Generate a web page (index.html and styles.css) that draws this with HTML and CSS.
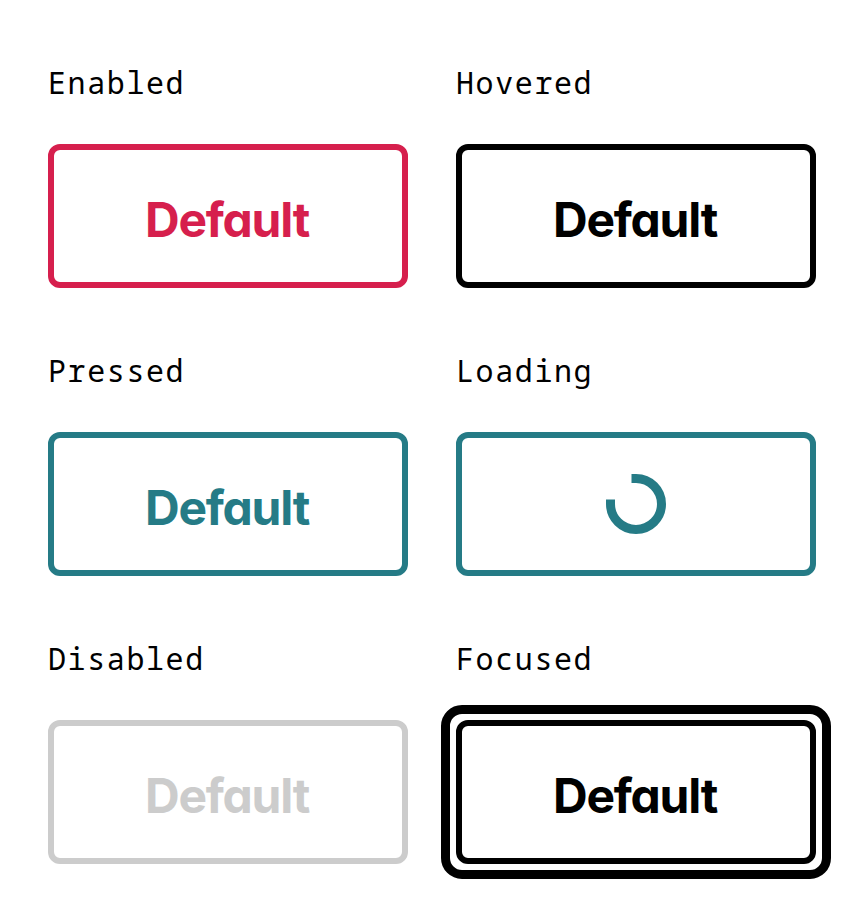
FILE: index.html
```html
<!DOCTYPE html>
<html lang="en">
<head>
<meta charset="utf-8">
<title>Button states</title>
<link rel="stylesheet" href="styles.css">
</head>
<body>
<main class="grid">
  <section class="state"><h2 class="label">Enabled</h2><button class="btn enabled"><span class="text">Default</span></button></section>
  <section class="state"><h2 class="label">Hovered</h2><button class="btn hovered"><span class="text">Default</span></button></section>
  <section class="state"><h2 class="label">Pressed</h2><button class="btn pressed"><span class="text">Default</span></button></section>
  <section class="state"><h2 class="label">Loading</h2><button class="btn pressed" aria-label="Loading"><svg class="spinner" viewBox="0 0 60 60"><path d="M4.5 25.5V30A25.5 25.5 0 1 0 30 4.5H25.5" fill="none" stroke="currentColor" stroke-width="9"/></svg></button></section>
  <section class="state"><h2 class="label">Disabled</h2><button class="btn disabled"><span class="text">Default</span></button></section>
  <section class="state"><h2 class="label">Focused</h2><button class="btn hovered focused"><span class="text">Default</span></button></section>
</main>
</body>
</html>
```

FILE: styles.css
```css
* { box-sizing: border-box; }
body { margin: 0; background: #fff; color: #000; }
.grid { display: grid; grid-template-columns: 360px 360px; grid-auto-rows: 240px; gap: 48px; padding: 48px; }
.state { display: flex; flex-direction: column; justify-content: space-between; }
.label { margin: 0; padding-top: 11px; font: 400 30px/48px "Noto Sans Mono", "DejaVu Sans Mono", monospace; letter-spacing: 1.6px; }
.btn { position: relative; display: flex; align-items: center; justify-content: center; width: 360px; height: 144px; padding: 0; border: 6px solid currentColor; border-radius: 12px; background: #fff; }
.text { padding: 8px 2px 0 0; font: 700 48px/60px Inter, sans-serif; font-feature-settings: "cv11" 1; letter-spacing: -1.25px; }
.enabled { color: #d61f4d; }
.hovered { color: #000; }
.pressed { color: #257b86; }
.disabled { color: #ccc; }
.focused::after { content: ""; position: absolute; inset: -21px; border: 9px solid currentColor; border-radius: 21px; }
.spinner { width: 60px; height: 60px; }
```
